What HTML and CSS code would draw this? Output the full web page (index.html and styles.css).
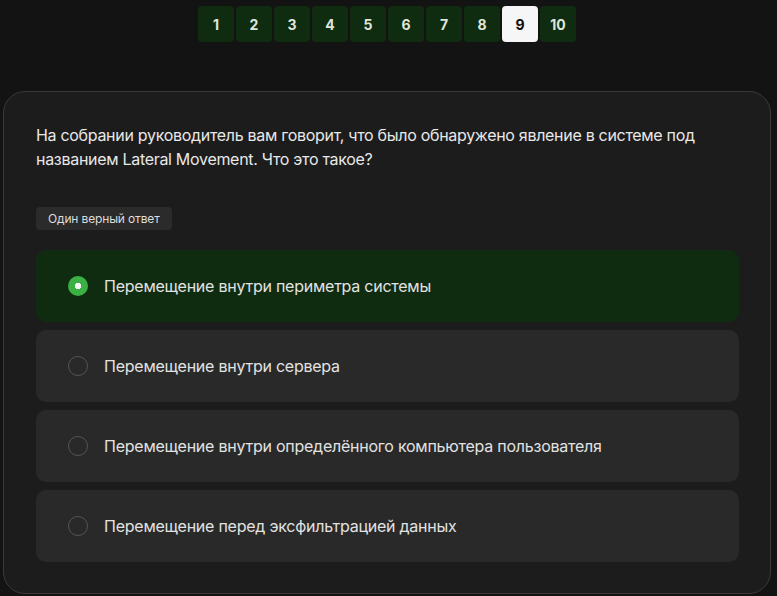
FILE: index.html
```html
<!DOCTYPE html>
<html lang="ru">
<head>
<meta charset="utf-8">
<link rel="stylesheet" href="styles.css">
</head>
<body>
<nav class="pager">
  <button class="page">1</button>
  <button class="page">2</button>
  <button class="page">3</button>
  <button class="page">4</button>
  <button class="page">5</button>
  <button class="page">6</button>
  <button class="page">7</button>
  <button class="page">8</button>
  <button class="page active">9</button>
  <button class="page">10</button>
</nav>
<main class="card">
  <p class="question">На собрании руководитель вам говорит, что было обнаружено явление в системе под названием Lateral Movement. Что это такое?</p>
  <span class="badge">Один верный ответ</span>
  <ul class="options">
    <li class="option selected"><span class="radio"></span><span class="label">Перемещение внутри периметра системы</span></li>
    <li class="option"><span class="radio"></span><span class="label">Перемещение внутри сервера</span></li>
    <li class="option"><span class="radio"></span><span class="label">Перемещение внутри определённого компьютера пользователя</span></li>
    <li class="option"><span class="radio"></span><span class="label">Перемещение перед эксфильтрацией данных</span></li>
  </ul>
</main>
</body>
</html>
```
FILE: styles.css
```css
* { box-sizing: border-box; }
html, body {
  margin: 0;
  padding: 0;
  background: #131313;
  font-family: Inter, "Noto Sans", sans-serif;
  color: #e6e6e6;
}
.pager {
  display: flex;
  justify-content: center;
  gap: 2px;
  padding: 6px 3px 0 0;
}
.page {
  width: 36px;
  height: 36px;
  border: 0;
  border-radius: 4px;
  background: #0f2c10;
  color: #dfe6d9;
  font-family: Inter, sans-serif;
  font-weight: 700;
  font-size: 14px;
  padding: 0;
}
.page.active {
  background: #f6f6f6;
  color: #111;
}
.card {
  margin: 49px 6px 0 3px;
  background: #1c1c1c;
  border: 1px solid #3a3a3a;
  border-radius: 22px;
  padding: 31px 31px 31px 32px;
  display: flex;
  flex-direction: column;
  align-items: flex-start;
}
.question {
  margin: 0;
  font-size: 16px;
  line-height: 24px;
  letter-spacing: -0.3px;
  color: #e8e8e8;
}
.badge {
  margin-top: 36px;
  height: 23px;
  line-height: 23px;
  padding: 0 12px;
  background: #2b2b2b;
  border-radius: 4px;
  font-size: 12px;
  letter-spacing: -0.15px;
  color: #dcdcdc;
}
.options {
  list-style: none;
  margin: 20px 0 0;
  padding: 0;
  align-self: stretch;
  display: flex;
  flex-direction: column;
  gap: 8px;
}
.option {
  height: 72px;
  display: flex;
  align-items: center;
  gap: 16px;
  padding: 0 32px;
  background: #292929;
  border-radius: 10px;
  font-size: 16px;
  letter-spacing: -0.24px;
  color: #e2e2e2;
}
.option.selected { background: #0f2c10; }
.radio {
  width: 20px;
  height: 20px;
  border-radius: 50%;
  border: 1.5px solid #555;
  flex: none;
}
.selected .radio {
  border: 0;
  background: radial-gradient(circle, #f4f4f4 0 3px, #3bb143 3.5px);
}
```
